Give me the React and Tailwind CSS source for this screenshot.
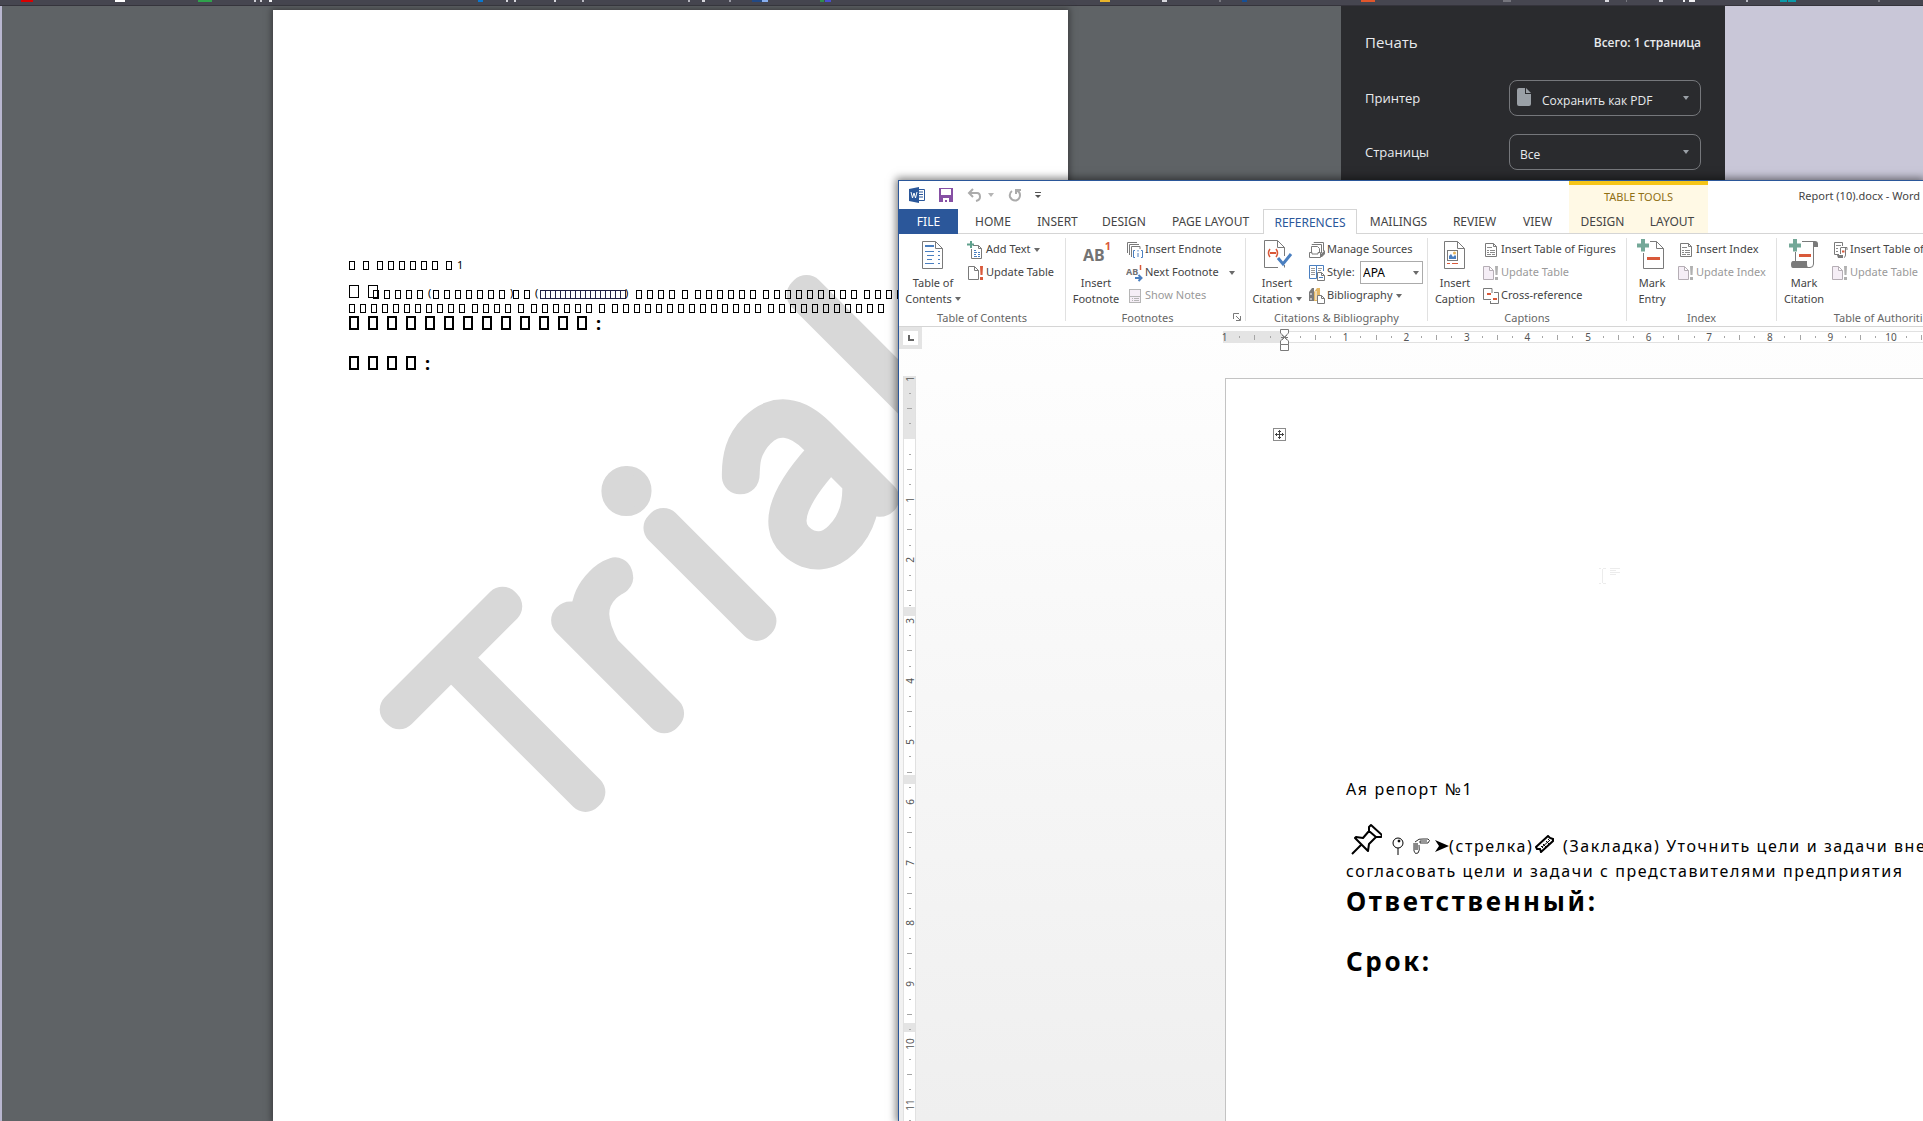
import React from "react";

/* ---------- bookmark strip ---------- */
const marks = [
  [21, 12, "#d90000"], [115, 10, "#ffffff"], [198, 14, "#2fa24c"], [254, 2, "#cfcfd6"], [260, 2, "#cfcfd6"], [269, 3, "#f1f1f4"],
  [478, 5, "#0a78d1"], [506, 2, "#d8d8de"], [514, 2, "#d8d8de"], [554, 2, "#d8d8de"], [582, 2, "#b9b9c2"], [688, 2, "#b9b9c2"],
  [702, 3, "#d8d8de"], [729, 2, "#9c9ca6"], [752, 10, "#234a86"], [762, 6, "#8ab0f0"], [820, 4, "#2f8f4e"], [825, 6, "#4a4fd0"],
  [1100, 10, "#e8b32a"], [1162, 5, "#d8d8de"], [1219, 2, "#77777f"], [1242, 5, "#164f95"], [1361, 14, "#e0562c"], [1503, 8, "#75757d"],
  [1605, 4, "#d8d8de"], [1626, 1, "#77777f"], [1659, 4, "#d8d8de"], [1683, 2, "#f1f1f4"], [1689, 6, "#f1f1f4"], [1746, 2, "#b9b9c2"],
  [1780, 7, "#0b9aa8"], [1788, 8, "#0b9aa8"], [1878, 2, "#77777f"],
];

function BookmarkStrip() {
  return (
    <header className="h-[6px] shrink-0 overflow-hidden border-b border-[#35343c] bg-[#464650]">
      <svg width="1923" height="2" shapeRendering="crispEdges" className="block" aria-hidden="true">
        {marks.map(([x, w, c]) => (
          <rect key={x} x={x} y="0" width={w} height="2" fill={c} />
        ))}
      </svg>
    </header>
  );
}

/* ---------- print preview ---------- */
const sizes = {
  small: { cell: "flex w-[11px] shrink-0", box: "h-[9px] w-[6px] border border-black" },
  tight: { cell: "flex w-[5px] shrink-0", box: "h-[9px] w-[6px] shrink-0 border border-[#222244]" },
  thin: { cell: "flex w-[19px] shrink-0", box: "h-[13px] w-[10px] border border-black" },
  large: { cell: "flex w-[19px] shrink-0", box: "h-[14px] w-[10px] border-2 border-black" },
};

/* A run of missing-glyph boxes, one per character, in words. */
function Boxes({ words, size = "small" }) {
  const { cell, box } = sizes[size];
  return (
    <span className="flex gap-[2px]">
      {words.map((count, i) => (
        <span key={i} className="flex">
          {Array.from({ length: count }, (_, j) => (
            <span key={j} className={cell}>
              <span className={box} />
            </span>
          ))}
        </span>
      ))}
    </span>
  );
}

function Watermark() {
  return (
    <svg className="absolute left-0 top-0" width="795" height="1111" fill="#d8d8d8" aria-hidden="true">
      <text
        transform="translate(258 839) rotate(-45)"
        dx="0 42 34 40 38"
        fontFamily="Lato"
        fontWeight="100"
        fontSize="276"
        stroke="#d8d8d8"
        strokeWidth="35"
        strokeLinejoin="round"
        strokeLinecap="round"
      >
        Trial
      </text>
      <circle cx="354" cy="481" r="17" />
    </svg>
  );
}

function Preview() {
  return (
    <main className="flex min-w-0 flex-1 justify-center bg-[#5f6366] pr-[2px] pt-1">
      <article className="relative w-[795px] overflow-hidden bg-white shadow-[0_0_6px_2px_#3f4043]">
        <Watermark />
        <div className="relative pl-[76px] pt-[247px] font-['Noto_Sans',sans-serif] text-[11px] leading-4 text-black">
          <div className="flex h-4 items-center gap-[3px]">
            <Boxes words={[1]} />
            <Boxes words={[1]} />
            <Boxes words={[6]} />
            <span className="flex items-center">
              <Boxes words={[1]} />
              <span>1</span>
            </span>
          </div>
          <div className="mt-3 flex h-[14px] items-end whitespace-nowrap leading-3">
            <span className="w-6 pb-px">
              <Boxes words={[2]} size="thin" />
            </span>
            <Boxes words={[5]} />
            <span className="w-[5px]">(</span>
            <Boxes words={[7]} />
            <span className="w-[3px]">)</span>
            <Boxes words={[2]} />
            <span className="w-[5px]">(</span>
            <Boxes words={[17]} size="tight" />
            <span className="w-[11px]">)</span>
            <Boxes words={[4, 1, 6, 9, 6]} />
          </div>
          <div className="mt-px flex h-4 items-center">
            <Boxes words={[11, 4, 1, 6, 1, 14, 11]} />
          </div>
          <div className="flex h-[14px] items-center text-[18px] font-bold">
            <Boxes words={[13]} size="large" />
            <span>:</span>
          </div>
          <div className="mt-[26px] flex h-[14px] items-center text-[18px] font-bold">
            <Boxes words={[4]} size="large" />
            <span>:</span>
          </div>
        </div>
      </article>
    </main>
  );
}

function PrintPanel() {
  return (
    <aside className="w-96 shrink-0 bg-[#2a2b2e] px-6 font-['Open_Sans',sans-serif] text-[13px] text-[#e8eaed]">
      <div className="flex h-[73px] items-center justify-between">
        <h1 className="text-[15px]">Печать</h1>
        <span className="text-[12px] font-semibold">Всего: 1 страница</span>
      </div>
      <div className="mt-px flex h-9 items-center justify-between">
        <label htmlFor="printer" className="pt-[2px]">Принтер</label>
        <div className="relative">
          <svg className="absolute left-2 top-2" width="14" height="18" viewBox="0 0 14 18" aria-hidden="true">
            <path d="M2 0H8V6H14V16A2 2 0 0 1 12 18H2A2 2 0 0 1 0 16V2A2 2 0 0 1 2 0Z" fill="#9aa0a6" />
            <path d="M9 0L14 5H9Z" fill="#9aa0a6" />
          </svg>
          <select id="printer" className="h-9 w-48 appearance-none rounded-lg border border-[#75777b] bg-transparent pl-8 pt-[6px] text-[12px]">
            <option>Сохранить как PDF</option>
          </select>
          <Caret className="absolute right-3 top-4 text-[#9aa0a6]" />
        </div>
      </div>
      <div className="mt-[18px] flex h-9 items-center justify-between">
        <label htmlFor="pages" className="pt-[2px]">Страницы</label>
        <div className="relative">
          <select id="pages" className="h-9 w-48 appearance-none rounded-lg border border-[#75777b] bg-transparent pl-[10px] pt-[6px] text-[12px]">
            <option>Все</option>
          </select>
          <Caret className="absolute right-3 top-4 text-[#9aa0a6]" />
        </div>
      </div>
    </aside>
  );
}

/* ---------- icons ---------- */
function Caret({ className = "" }) {
  return (
    <svg className={className} width="6" height="4" viewBox="0 0 6 4" aria-hidden="true">
      <path d="M0 0H6L3 4Z" fill="currentColor" />
    </svg>
  );
}

function Ico({ w = 18, h = 18, children }) {
  return (
    <svg width={w} height={h} viewBox={`0 0 ${w} ${h}`} fill="none" className="shrink-0" aria-hidden="true">
      {children}
    </svg>
  );
}

const BigPage = ({ children }) => (
  <Ico w={32} h={32}>
    <path d="M5.5 2.5H18.5L25.5 9.5V29.5H5.5Z" fill="#fff" stroke="#7a7a7a" />
    <path d="M18.5 2.5V9.5H25.5" stroke="#7a7a7a" />
    {children}
  </Ico>
);

const TocIcon = () => (
  <BigPage>
    <g stroke="#4a7fc0" shapeRendering="crispEdges">
      <path d="M8 7H17" strokeWidth="2" />
      <path d="M8 12.5H17M10 16.5H17M10 20.5H15M8 24.5H17M21 12.5H23M21 16.5H23M21 20.5H23M21 24.5H23" />
    </g>
  </BigPage>
);

const CitationIcon = () => (
  <Ico w={32} h={32}>
    <path d="M23.5 17V8.5L16.5 1.5H3.5V28.5H17M23.5 26V28.5" fill="#fff" stroke="#7a7a7a" />
    <path d="M16.5 1.5V8.5H23.5" stroke="#7a7a7a" />
    <path d="M9 10Q6 14 9 18M15 10Q18 14 15 18" stroke="#d9593a" strokeWidth="1.5" />
    <path d="M9 14H15" stroke="#d9593a" strokeWidth="2" />
    <path d="M17 19L22 25L30 15" stroke="#4a7fc0" strokeWidth="3" />
  </Ico>
);

const CaptionIcon = () => (
  <BigPage>
    <rect x="8.5" y="11.5" width="10" height="10" stroke="#7a7a7a" />
    <path d="M10 20V17L12 15L14 18L16 16L17 17V20Z" fill="#4a7fc0" />
    <circle cx="15.5" cy="14" r="1.5" fill="#e5b458" />
    <path d="M8 24.5H11M13 24.5H19" stroke="#d9593a" />
  </BigPage>
);

const Plus = () => <path d="M5 0H9V4.5H13V8.5H9V12.5H5V8.5H1V4.5H5Z" fill="#74a898" />;

const MarkEntryIcon = () => (
  <Ico w={32} h={32}>
    <path d="M14 2.5H20.5L27.5 9.5V29.5H7.5V14M20.5 2.5V9.5H27.5" stroke="#7a7a7a" />
    <path d="M11 19.5H24" stroke="#d9593a" strokeWidth="3" />
    <Plus />
  </Ico>
);

const MarkCitationIcon = () => (
  <Ico w={32} h={32}>
    <path d="M14 2.5H27M25.5 4V25Q25.5 28.5 22 28.5H6M7.5 13V23" stroke="#7a7a7a" />
    <path d="M25 2H27Q30 2 30 5V8H25Z" fill="#7a7a7a" />
    <path d="M5 22H19V25Q19 29 22 29H5Q3 29 3 25.5Q3 22 5 22Z" fill="#7a7a7a" />
    <path d="M11 16.5H23" stroke="#d9593a" strokeWidth="3" />
    <Plus />
  </Ico>
);

const FootnoteIcon = () => (
  <span className="flex h-8 items-center justify-center pl-[2px] text-[16px] font-bold text-[#737373]">
    AB<sup className="-mt-2 text-[11px] text-[#d9593a]">1</sup>
  </span>
);

const AddTextIcon = () => (
  <Ico>
    <path d="M6 4.5H11.5L14.5 7.5V17.5H4.5V8M11.5 4.5V7.5H14.5" stroke="#7a7a7a" />
    <path d="M7 9.5H9M7 11.5H10M7 13.5H9M7 15.5H10M11 11.5H13M11 13.5H13M11 15.5H13" stroke="#4a7fc0" />
    <path d="M3 0H5V2.5H7V4.5H5V7H3V4.5H0V2.5H3Z" fill="#5fa08c" />
  </Ico>
);

const UpdateIcon = ({ off }) => (
  <Ico>
    <path d="M1.5 2.5H7.5L11.5 6.5V15.5H1.5ZM7.5 2.5V6.5H11.5" fill={off ? "#f5eef6" : "#fff"} stroke={off ? "#b5aeb5" : "#7a7a7a"} />
    <path d="M13 2H16L15.5 11H13.5ZM13 13H16V16H13Z" fill={off ? "#b0b0b0" : "#d9593a"} />
  </Ico>
);

const EndnoteIcon = () => (
  <Ico>
    <path d="M1.5 12V1.5H11M3.5 14V3.5H13M5.5 16V5.5H14V8" stroke="#7a7a7a" />
    <path d="M9 9.5H7.5V16.5H9M15 9.5H16.5V16.5H15M12 12V16M12 9V10.5" stroke="#4a7fc0" />
  </Ico>
);

const NextIcon = () => (
  <Ico>
    <text x="0" y="11" fontSize="9" fontWeight="bold" fill="#737373">AB</text>
    <path d="M14.5 1V6" stroke="#d9593a" strokeWidth="1.5" />
    <path d="M9 14H15M12.5 11L15.5 14L12.5 17" stroke="#4a7fc0" strokeWidth="2" />
  </Ico>
);

const NotesIcon = () => (
  <Ico>
    <rect x="3.5" y="2.5" width="11" height="13" fill="#f5eef6" stroke="#b5b5b5" />
    <path d="M3 9.5H15M6 11.5H7M8 11.5H13M6 13.5H7M8 13.5H13" stroke="#b5b5b5" />
  </Ico>
);

const SourcesIcon = () => (
  <Ico>
    <path d="M6 2V1.5H15.5V10M4 4V3.5H13.5V12M3.5 11V5.5H9.5L11.5 7.5V11" stroke="#7a7a7a" />
    <path d="M1.5 11.5H4V13H10V11.5H12.5V16.5H1.5Z" stroke="#7a7a7a" />
    <path d="M13 13L17 9V13L14 16H13Z" fill="#7a7a7a" />
  </Ico>
);

const StyleIcon = () => (
  <Ico>
    <path d="M1.5 1.5H8.5V14.5H1.5ZM8.5 1.5H15.5V7M8.5 1.5V14" stroke="#4a7fc0" />
    <path d="M3 4.5H7M3 6.5H7M3 8.5H7M3 10.5H7M10 4.5H14M10 6.5H13" stroke="#999" />
    <path d="M9.5 8.5H13.5L16.5 11.5V16.5H9.5ZM13.5 8.5V11.5H16.5" fill="#fff" stroke="#7a7a7a" />
    <path d="M11 13.5H15" stroke="#4a7fc0" />
  </Ico>
);

const BiblioIcon = () => (
  <Ico>
    <path d="M1 5L4 1H6V14H1Z" fill="#7a7a7a" />
    <path d="M2 7H4M2 12H4" stroke="#fff" />
    <path d="M6 5L9 1H12V14H6Z" fill="#e3b765" />
    <path d="M8 4V13" stroke="#fff" />
    <path d="M9.5 8.5H13.5L16.5 11.5V16.5H9.5ZM13.5 8.5V11.5H16.5" fill="#fff" stroke="#7a7a7a" />
  </Ico>
);

const FiguresIcon = () => (
  <Ico>
    <path d="M3.5 2.5H11.5L14.5 5.5V15.5H3.5ZM11.5 2.5V5.5H14.5" fill="#fff" stroke="#7a7a7a" />
    <path d="M5 6.5H10M5 9.5H7M8 9.5H13M5 11.5H7M8 11.5H13M5 13.5H9M10 13.5H13" stroke="#8a8a8a" />
  </Ico>
);

const CrossIcon = () => (
  <Ico>
    <path d="M10 6V1.5H1.5V12.5H9" stroke="#7a7a7a" />
    <path d="M12 5.5H16.5V16.5H8M8.5 14V16.5" stroke="#7a7a7a" />
    <path d="M5 7H9M11 12H15" stroke="#d9593a" strokeWidth="2" />
  </Ico>
);

const AuthIcon = () => (
  <Ico>
    <path d="M8 13.5H3.5V1.5H11.5V5" stroke="#7a7a7a" />
    <path d="M5 4.5H10M5 7.5H7M5 10.5H7" stroke="#8a8a8a" />
    <path d="M9.5 6.5H16V9M14.5 7V14Q14.5 16 13 16.5M9.5 7V13" stroke="#7a7a7a" />
    <path d="M6 14H12V17H7Z" fill="#7a7a7a" />
    <path d="M11 10.5H13.5" stroke="#d9593a" strokeWidth="2" />
  </Ico>
);

/* ---------- ribbon ---------- */
function Small({ icon, children, off, drop, far }) {
  return (
    <button type="button" disabled={off} className={"flex h-[23px] items-center gap-px whitespace-nowrap " + (off ? "text-[#9a9a9a]" : "text-[#444444]")}>
      {icon}
      <span>{children}</span>
      {drop && <Caret className={far ? "ml-[9px] text-[#6a6a6a]" : "ml-[2px] text-[#6a6a6a]"} />}
    </button>
  );
}

function Big({ icon, top, bottom, drop, className }) {
  return (
    <button type="button" className={"flex h-[72px] shrink-0 flex-col items-center pt-px leading-4 " + className}>
      {icon}
      <span className="mt-1">{top}</span>
      <span className="flex items-center gap-[3px] whitespace-nowrap">
        {bottom}
        {drop && <Caret className="text-[#6a6a6a]" />}
      </span>
    </button>
  );
}

function Group({ title, className, children, launcher }) {
  return (
    <section className={"relative flex h-[83px] shrink-0 flex-col " + className}>
      <div className="flex h-[72px] shrink-0">{children}</div>
      <h2 className={"text-center leading-4 text-[#666666]" + (launcher ? " pr-4" : "")}>{title}</h2>
      {launcher && (
        <button type="button" aria-label="Footnote settings" className="absolute bottom-0 right-1">
          <Ico w={8} h={8}>
            <path d="M.5 6V.5H6M3 3L7 7M7.5 3V7.5H3" stroke="#7a7a7a" />
          </Ico>
        </button>
      )}
    </section>
  );
}

const bordered = " border-r border-[#e1e1e1]";

function Ribbon() {
  return (
    <div className="flex h-[93px] shrink-0 overflow-hidden border-b border-[#d5d5d5] pt-1 text-[11px] text-[#444444]">
      <Group title="Table of Contents" className={"w-[167px]" + bordered}>
        <Big className="w-[68px]" icon={<TocIcon />} top="Table of" bottom="Contents" drop />
        <div>
          <Small icon={<AddTextIcon />} drop>Add Text</Small>
          <Small icon={<UpdateIcon />}>Update Table</Small>
        </div>
      </Group>
      <Group title="Footnotes" className={"w-[180px]" + bordered} launcher>
        <Big className="w-[60px]" icon={<FootnoteIcon />} top="Insert" bottom="Footnote" />
        <div>
          <Small icon={<EndnoteIcon />}>Insert Endnote</Small>
          <Small icon={<NextIcon />} drop far>Next Footnote</Small>
          <Small icon={<NotesIcon />} off>Show Notes</Small>
        </div>
      </Group>
      <Group title="Citations & Bibliography" className={"w-[182px]" + bordered}>
        <Big className="w-[62px]" icon={<CitationIcon />} top="Insert" bottom="Citation" drop />
        <div>
          <Small icon={<SourcesIcon />}>Manage Sources</Small>
          <div className="relative flex h-[23px] items-center gap-px">
            <StyleIcon />
            <label htmlFor="style" className="w-8">Style:</label>
            <select id="style" className="h-[23px] w-[63px] appearance-none border border-[#ababab] bg-white pl-[2px] text-[12px] text-black">
              <option>APA</option>
            </select>
            <Caret className="absolute right-1 top-[10px] text-[#6a6a6a]" />
          </div>
          <Small icon={<BiblioIcon />} drop>Bibliography</Small>
        </div>
      </Group>
      <Group title="Captions" className={"w-[199px]" + bordered}>
        <Big className="w-[54px]" icon={<CaptionIcon />} top="Insert" bottom="Caption" />
        <div>
          <Small icon={<FiguresIcon />}>Insert Table of Figures</Small>
          <Small icon={<UpdateIcon off />} off>Update Table</Small>
          <Small icon={<CrossIcon />}>Cross-reference</Small>
        </div>
      </Group>
      <Group title="Index" className={"w-[150px]" + bordered}>
        <Big className="w-[50px]" icon={<MarkEntryIcon />} top="Mark" bottom="Entry" />
        <div>
          <Small icon={<FiguresIcon />}>Insert Index</Small>
          <Small icon={<UpdateIcon off />} off>Update Index</Small>
        </div>
      </Group>
      <Group title="Table of Authorities" className="w-[214px]">
        <Big className="w-[54px]" icon={<MarkCitationIcon />} top="Mark" bottom="Citation" />
        <div>
          <Small icon={<AuthIcon />}>Insert Table of Authorities</Small>
          <Small icon={<UpdateIcon off />} off>Update Table</Small>
        </div>
      </Group>
    </div>
  );
}

function TitleBar() {
  return (
    <div className="flex h-7 shrink-0 items-center pl-[10px]">
      <Ico w={17} h={16}>
        <path d="M9 2.5H15.5V13.5H9" fill="#fff" stroke="#2b579a" />
        <path d="M10 5H14M10 7.5H14M10 10H14" stroke="#2b579a" />
        <path d="M0 2L10 0V16L0 14Z" fill="#2b579a" />
        <path d="M2 5L3.5 11L5 6L6.5 11L8 5" stroke="#fff" />
      </Ico>
      <button type="button" aria-label="Save" className="ml-[13px]">
        <Ico w={14} h={14}>
          <path d="M0 0H14V14H0Z" fill="#8650a4" />
          <path d="M2 1H12V7H2ZM4 10H10V14H8V12H6V14H4Z" fill="#fff" />
        </Ico>
      </button>
      <button type="button" aria-label="Undo" className="ml-[14px]">
        <Ico w={15} h={14}>
          <path d="M6 1L2 5L6 9M2 5H10Q13 5 13 9Q13 12 9 13" stroke="#ababab" strokeWidth="2" />
        </Ico>
      </button>
      <Caret className="ml-[6px] text-[#b5b5b5]" />
      <button type="button" aria-label="Repeat" className="ml-[14px]">
        <Ico w={14} h={14}>
          <path d="M4 3Q1 5 2 9Q4 13 8 12.5Q12 11 12 7Q12 4 9 2.5M8 6V2H13" stroke="#ababab" strokeWidth="2" />
        </Ico>
      </button>
      <button type="button" aria-label="Customize toolbar" className="ml-[13px]">
        <Ico w={6} h={7}>
          <path d="M0 .5H6" stroke="#555" />
          <path d="M0 3H6L3 6Z" fill="#555" />
        </Ico>
      </button>
    </div>
  );
}

const tabs = [
  ["HOME", "w-16 ml-[3px]"],
  ["INSERT", "w-[65px]"],
  ["DESIGN", "w-[68px]"],
  ["PAGE LAYOUT", "w-[105px]"],
  ["REFERENCES", "w-[94px]"],
  ["MAILINGS", "w-[83px]"],
  ["REVIEW", "w-[69px]"],
  ["VIEW", "w-[57px]"],
];

function Tabs() {
  return (
    <nav className="flex h-[25px] shrink-0 text-[12px] text-[#444444]">
      <button type="button" className="w-[59px] bg-[#2b579a] text-white">FILE</button>
      <div className="flex flex-1 border-b border-[#d5d5d5]">
        {tabs.map(([name, w]) => (
          <button
            key={name}
            type="button"
            className={
              "whitespace-nowrap pt-px " + w +
              (name === "REFERENCES" ? " -mb-px border border-b-0 border-[#d5d5d5] bg-white text-[#2b579a]" : "")
            }
          >
            {name}
          </button>
        ))}
      </div>
    </nav>
  );
}

function TableTools() {
  return (
    <div className="absolute left-[670px] top-0 flex h-[52px] w-[139px] flex-col border-t-4 border-[#f5c518] bg-[#fff9e5] text-[12px] text-[#444444]">
      <span className="flex flex-1 items-center justify-center text-[11px] text-[#8f7014]">TABLE TOOLS</span>
      <div className="flex h-6 pt-px">
        <button type="button" className="w-[67px]">DESIGN</button>
        <button type="button" className="w-[72px]">LAYOUT</button>
      </div>
    </div>
  );
}

const hCells = [1, "", 1, 2, 3, 4, 5, 6, 7, 8, 9, 10];
const vCells = [1, "", 1, 2, 3, 4, 5, 6, 7, 8, 9, 10, 11];

function HorizontalRuler() {
  return (
    <div className="relative ml-[301px] mt-1 flex h-3 flex-1 text-[10px]">
      <div className="w-[61px] bg-[#e4e4e4]" />
      <div className="flex-1 border-y border-[#e1e1e1] bg-white" />
      <div className="absolute -left-[6px] top-0 grid h-3 w-[727px] grid-cols-12 text-[#555555]">
        {hCells.map((n, i) => (
          <div key={i} className="grid grid-cols-4 items-center justify-items-center leading-3">
            <span>{n}</span>
            <i className="h-[2px] w-px bg-[#a5a5a5]" />
            <i className="h-[5px] w-px bg-[#a5a5a5]" />
            <i className="h-[2px] w-px bg-[#a5a5a5]" />
          </div>
        ))}
      </div>
      <svg className="absolute left-[57px] -top-[2px]" width="9" height="22" viewBox="0 0 9 22" fill="none" aria-hidden="true">
        <path d="M.5 .5H8.5V4L4.5 8L.5 4ZM.5 15.5V12L4.5 8L8.5 12V15.5Z" fill="#fff" stroke="#7a7a7a" />
        <path d="M2 6L7 11M7 6L2 11M1 8.5H8" stroke="#7a7a7a" />
        <path d="M.5 15.5H8.5V21.5H.5Z" fill="#fff" stroke="#7a7a7a" />
      </svg>
    </div>
  );
}

function VerticalRuler() {
  return (
    <div className="relative ml-1 mt-[27px] flex w-[13px] shrink-0 flex-col overflow-hidden border-x border-[#e1e1e1] bg-white text-[10px]">
      <div className="h-[63px] bg-[#e4e4e4]" />
      <div className="mt-[168px] h-[9px] bg-[#e4e4e4]" />
      <div className="mt-[159px] h-[9px] bg-[#e4e4e4]" />
      <div className="mt-[239px] h-[9px] bg-[#e4e4e4]" />
      <div className="absolute -top-[5px] left-0 grid h-[787px] w-[11px] grid-rows-13 text-[#555555]">
        {vCells.map((n, i) => (
          <div key={i} className="grid grid-rows-4 items-center justify-items-center">
            <span className="h-3 -rotate-90 leading-3">{n}</span>
            <i className="h-px w-[2px] bg-[#a5a5a5]" />
            <i className="h-px w-[5px] bg-[#a5a5a5]" />
            <i className="h-px w-[2px] bg-[#a5a5a5]" />
          </div>
        ))}
      </div>
    </div>
  );
}

function DocumentPage() {
  return (
    <article className="relative ml-[309px] mt-[29px] min-w-0 flex-1 overflow-hidden border-l border-t border-[#c3c3c3] bg-white text-[16px] text-black">
      <button type="button" aria-label="Move table" className="absolute left-[47px] top-[49px] border border-[#8c8c8c] bg-white">
        <Ico w={11} h={11}>
          <path d="M5.5 1V10M1 5.5H10M4 2.5H7M4 8.5H7M2.5 4V7M8.5 4V7" stroke="#444" />
        </Ico>
      </button>
      <svg className="absolute left-[372px] top-[189px]" width="24" height="18" fill="none" stroke="#ececec" aria-hidden="true">
        <path d="M1 .5H3M5 .5H8M4.5 1V15M1 15.5H3M5 15.5H8M12 .5H22M12 2.5H18M12 4.5H22M12 6.5H18" />
      </svg>
      <div className="whitespace-nowrap pl-[120px] pt-[398px]">
        <p className="leading-6 tracking-widest">Ая репорт №1</p>
        <div className="mt-[25px] flex h-8 items-end leading-6 tracking-widest">
          <svg className="mb-[3px] shrink-0" width="36" height="32" fill="none" stroke="#000" strokeWidth="2" strokeLinejoin="round" aria-hidden="true">
            <path d="M6 31L16 21M9 15L22 28L23 21L30 14L35 14L36 12L25 2L23 4L23 8L17 15L10 14ZM23 8L30 14" />
          </svg>
          <svg className="mb-[3px] ml-[10px] shrink-0" width="12" height="18" fill="none" stroke="#000" aria-hidden="true">
            <circle cx="6" cy="6" r="5" />
            <path d="M6 11V18" />
            <circle cx="7" cy="4" r="1" fill="#000" />
          </svg>
          <svg className="mb-[3px] ml-2 shrink-0" width="20" height="18" fill="none" stroke="#333" aria-hidden="true">
            <path d="M3 5Q7 1 11 2H16Q19 3 16 6H8V4H15M2 6V14Q3 18 6 16Q8 14 7 8M4 9V13" />
            <path d="M2 6H6V13H2Z" fill="#888" stroke="none" />
          </svg>
          <svg className="mb-[6px] ml-[3px] shrink-0" width="14" height="12" aria-hidden="true">
            <path d="M0 0L14 6L0 12L4 6Z" fill="#000" />
          </svg>
          <span>(стрелка)</span>
          <svg className="mb-[5px] ml-[2px] shrink-0" width="20" height="18" fill="none" stroke="#000" aria-hidden="true">
            <path d="M1 12L13 1L15 3L18 4L18 6L6 17L5 14L2 14Z" strokeWidth="2" />
            <path d="M6 11L8 13M8 9L11 12M11 6L14 9M13 4L15 6M7 12L14 6" />
          </svg>
          <span className="ml-[2px]">&nbsp;(Закладка) Уточнить цели и задачи внедрения</span>
        </div>
        <p className="leading-[26px] tracking-widest">согласовать цели и задачи с представителями предприятия</p>
        <p className="mt-px text-[26px] font-bold leading-8 tracking-widest">Ответственный:</p>
        <p className="mt-7 text-[26px] font-bold leading-8 tracking-widest">Срок:</p>
      </div>
    </article>
  );
}

function WordWindow() {
  return (
    <section className="absolute bottom-0 left-[898px] right-0 top-[180px] flex flex-col overflow-hidden border-l border-t border-[#2b579a] bg-white font-['Noto_Sans',sans-serif] shadow-[0_0_8px_2px_#00000080]">
      <TitleBar />
      <h1 className="absolute right-[3px] top-[3px] whitespace-nowrap text-[11px] leading-6 text-[#444444]">Report (10).docx - Word</h1>
      <Tabs />
      <TableTools />
      <Ribbon />
      <div className="flex min-h-0 flex-1 flex-col bg-linear-to-b from-[#fefefe] to-[#efefef]">
        <div className="flex h-[22px] shrink-0">
          <div className="flex w-[23px] items-center justify-center border-4 border-[#e4e4e4] bg-white">
            <Ico w={6} h={6}>
              <path d="M1 0V5H6" stroke="#666" strokeWidth="2" />
            </Ico>
          </div>
          <HorizontalRuler />
        </div>
        <div className="flex min-h-0 flex-1">
          <VerticalRuler />
          <DocumentPage />
        </div>
      </div>
    </section>
  );
}

export default function App() {
  return (
    <div className="relative flex h-screen flex-col overflow-hidden bg-[#c9c7d8]">
      <BookmarkStrip />
      <div className="flex min-h-0 flex-1">
        <div className="w-[2px] shrink-0 bg-[#b9b7d0]" />
        <Preview />
        <PrintPanel />
        <div className="w-[198px] shrink-0 bg-[#c9c7d8]" />
      </div>
      <WordWindow />
    </div>
  );
}
